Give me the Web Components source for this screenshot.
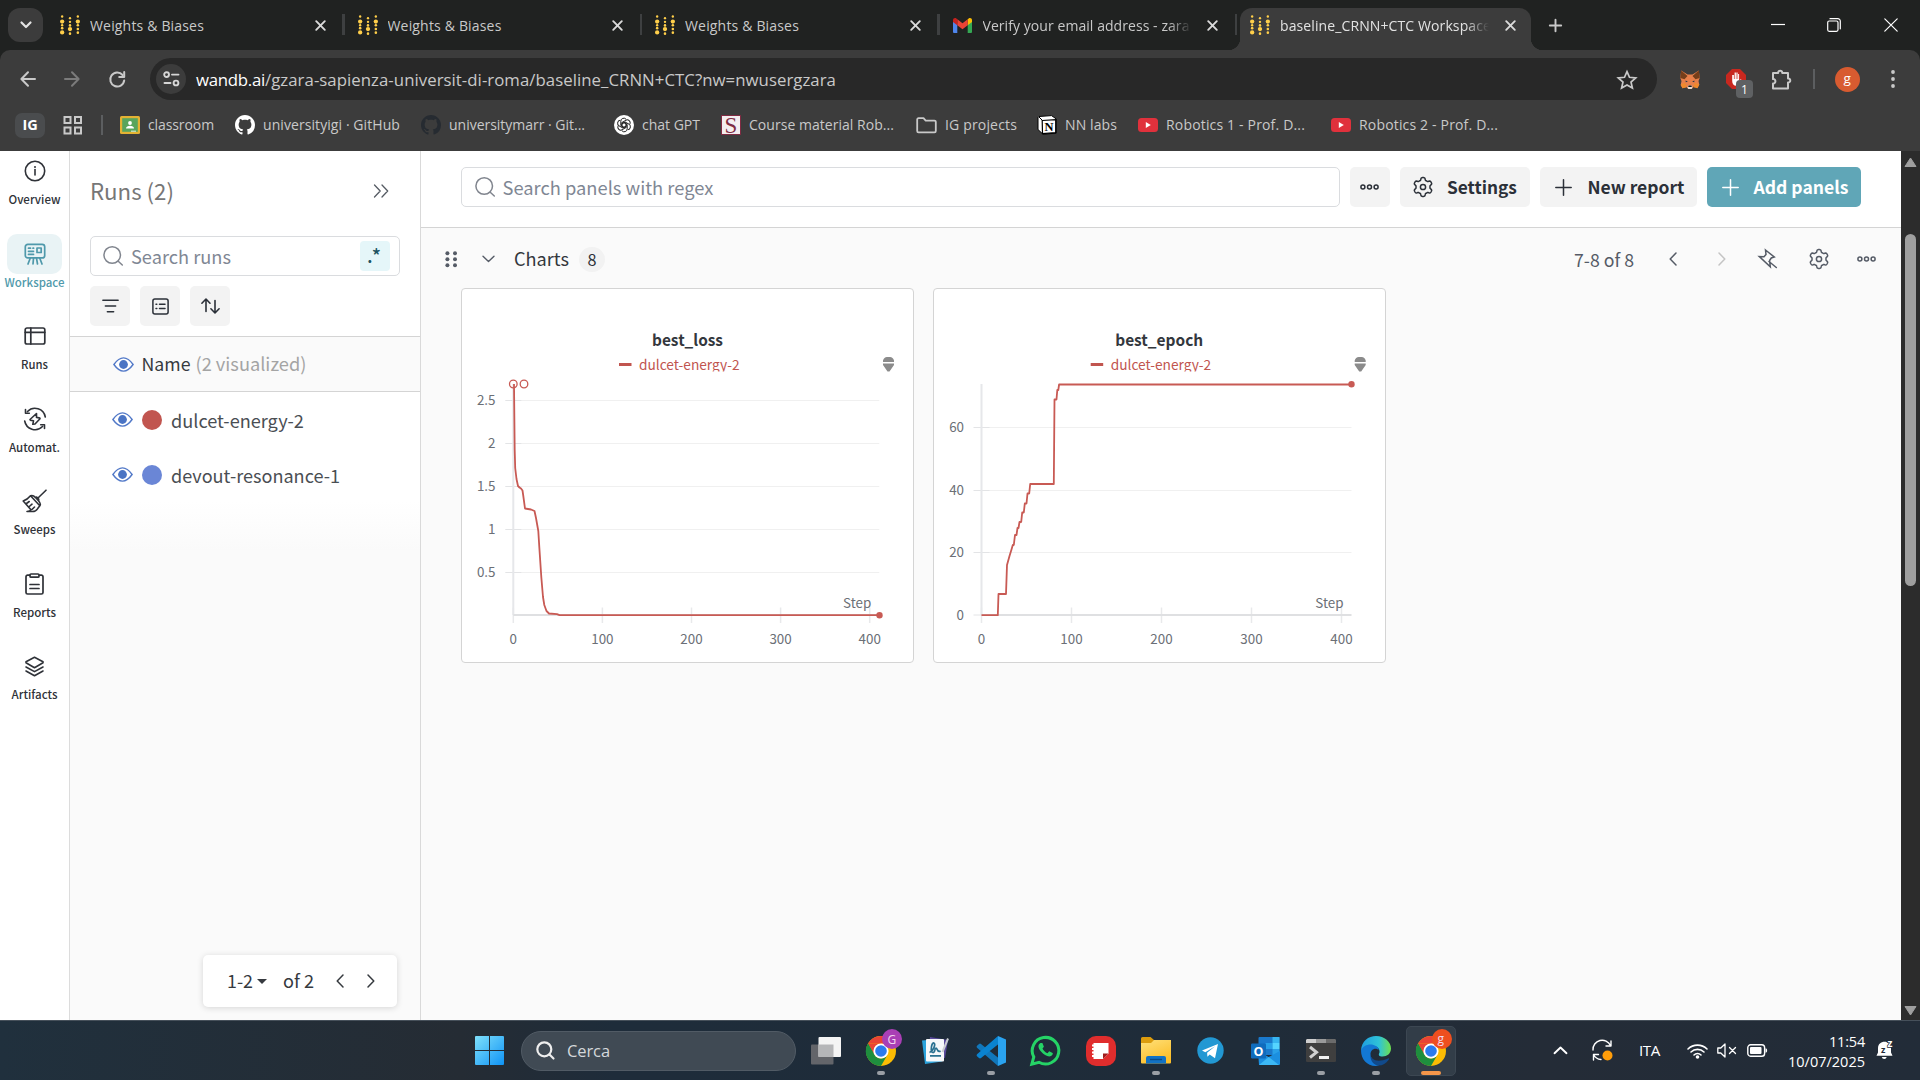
<!DOCTYPE html>
<html lang="it">
<head>
<meta charset="utf-8">
<title>baseline_CRNN+CTC Workspace</title>
<style>
html,body{margin:0;height:100%;overflow:hidden;background:#fafafa}
body{font-family:"Open Sans","Noto Sans",sans-serif}
</style>
</head>
<body>
<desktop-screen></desktop-screen>
<script>
const gear = (() => {
  let d = '';
  for (let i = 0; i < 120; i++) {
    const a = i / 120 * Math.PI * 2;
    const r = 8.2 + 1.25 * Math.tanh(2.2 * Math.cos(6 * a));
    d += (i ? 'L' : 'M') + (10 + r * Math.sin(a)).toFixed(2) + ' ' + (10 - r * Math.cos(a)).toFixed(2);
  }
  return `<path d="${d}Z"/><circle cx="10" cy="10" r="2.600"/>`;
})();
const st = (w, body, extra = '') => `<g fill="none" stroke="currentColor" stroke-width="${w}" stroke-linecap="round" stroke-linejoin="round" ${extra}>${body}</g>`;
const wbDots = (() => {
  const y = '#ffcf4a', c = (x, yy, r) => `<circle cx="${x}" cy="${yy}" r="${r}" fill="${y}"/>`;
  return c(2.2,1.3,1.2)+c(2.2,6.5,2.2)+c(2.2,10.2,1.2)+c(2.2,13.2,1.3)+c(2.2,17.6,2.2)
    +c(10.2,3,1.2)+c(10.2,6.8,1.2)+c(10.2,10.4,1.3)+c(10.2,14.2,2.2)+c(10.2,18.8,1.3)
    +c(18.2,1.3,1.2)+c(18.2,6.5,2.2)+c(18.2,10.2,1.3)+c(18.2,14,1.3)+c(18.2,17.8,1.3);
})();
const ghPath = 'M8 0C3.58 0 0 3.58 0 8c0 3.54 2.29 6.53 5.47 7.59.4.07.55-.17.55-.38 0-.19-.01-.82-.01-1.49-2.01.37-2.53-.49-2.69-.94-.09-.23-.48-.94-.82-1.13-.28-.15-.68-.52-.01-.53.63-.01 1.08.58 1.23.82.72 1.21 1.87.87 2.33.66.07-.52.28-.87.51-1.07-1.78-.2-3.64-.89-3.64-3.95 0-.87.31-1.59.82-2.15-.08-.2-.36-1.02.08-2.12 0 0 .67-.21 2.2.82.64-.18 1.32-.27 2-.27.68 0 1.36.09 2 .27 1.53-1.04 2.2-.82 2.2-.82.44 1.1.16 1.92.08 2.12.51.56.82 1.27.82 2.15 0 3.07-1.87 3.75-3.65 3.95.29.25.54.73.54 1.48 0 1.07-.01 1.93-.01 2.2 0 .21.15.46.55.38A8.013 8.013 0 0016 8c0-4.42-3.58-8-8-8z';
const chrome = `<circle cx="15" cy="15" r="15" fill="#fbbc04"/>
  <path d="M2 7.5A15 15 0 0 1 28 7.5H15z" fill="#ea4335"/>
  <path d="M2 7.5A15 15 0 0 0 15 30L21.500 18.700A7.500 7.500 0 0 1 8.500 18.700z" fill="#1e8e3e"/><path d="M2 7.500L8.500 18.700 15 15V7.500z" fill="#ea4335"/><path d="M2 7.500A15 15 0 0 0 3 24L8.500 18.700z" fill="#1e8e3e"/>
  <circle cx="15" cy="15" r="7.6" fill="#fff"/><circle cx="15" cy="15" r="5.8" fill="#2b7bee"/>`;

/* name: [width, height, viewBox, markup] */
const ICONS = {
  wb: [20, 20, '0 0 20.4 20', wbDots],
  chevS: [12, 8, '0 0 12 8', st(2.2, '<path d="M1.5 1.5L6 6l4.500-4.500"/>')],
  x: [11, 11, '0 0 11 11', st(1.9, '<path d="M1.2 1.2l8.6 8.6M9.8 1.2L1.2 9.8"/>')],
  xw: [14, 14, '0 0 14 14', st(1.2, '<path d="M.8.8l12.4 12.4M13.2.8L.8 13.2"/>')],
  minw: [14, 14, '0 0 14 14', '<path d="M0 6.500h14" stroke="currentColor" stroke-width="1.2"/>'],
  maxw: [14, 14, '0 0 14 14', st(1.2, '<rect x=".7" y="3" width="10.3" height="10.3" rx="1.5"/><path d="M3 .7h7.800a2.500 2.500 0 0 1 2.500 2.500v7.600"/>')],
  plusTab: [13, 13, '0 0 13 13', st(1.9, '<path d="M6.500.8v11.400M.8 6.500h11.400"/>')],
  gmail: [19, 15, '0 0 19 15', '<path d="M0 2v12a1 1 0 0 0 1 1h3.300V5.500z" fill="#4f86ec"/><path d="M19 2v12a1 1 0 0 1-1 1h-3.300V5.500z" fill="#34a853"/><path d="M14.700 1.200v6L19 4V2c0-1.800-2-2.600-3.300-1.600z" fill="#fbbc04"/><path d="M4.300 7.300v-6l5.200 4 5.200-4v6l-5.200 4z" fill="#ea4335"/><path d="M0 2v2l4.300 3.300V1.200L3.300.4C2-.6 0 .2 0 2z" fill="#c5221f"/>'],
  back: [16, 16, '0 0 16 16', st(2, '<path d="M15 8H1.500M8 1.300L1.400 8 8 14.700"/>')],
  fwd: [16, 16, '0 0 16 16', st(2, '<path d="M1 8h13.500M8 1.300L14.600 8 8 14.700"/>')],
  reload: [17, 17, '0 0 17 17', st(2, '<path d="M15.200 9.400A7 7 0 1 1 13.600 4"/><path d="M15.200 1v5h-5" />')],
  site: [17, 16, '0 0 17 16', st(1.9, '<circle cx="3.600" cy="3.600" r="2.400"/><path d="M9 3.600h6.500M1.500 12h6"/><circle cx="13" cy="12" r="2.400"/>')],
  star: [20, 19, '0 0 20 19', st(1.700, '<path d="M10 1.600l2.500 5.700 6.200.6-4.700 4.100 1.400 6.100-5.400-3.200-5.400 3.200L6 12 1.300 7.900l6.200-.6z" style="stroke-linejoin:miter"/>')],
  fox: [20, 19, '0 0 20 19', '<path d="M1.200.5l6.300 4h5l6.300-4 .9 7.500-1.200 3 .8 3.800-1.800 3-4-1.200L11.800 19H8.200l-1.700-1.900-4 1.200-1.800-3L1.500 11 .3 8z" fill="#e8804b"/><path d="M1.200.5L7.500 6l-3 3.300L.3 8zM18.800.5L12.500 6l3 3.300L19.700 8z" fill="#763e1a"/><path d="M.7 14.500l4.500-1.800 1.600 4.600-4.300 1zM19.300 14.500l-4.500-1.800-1.600 4.600 4.300 1z" fill="#f08a2c"/><path d="M8 15.500h4l.4 2.200-.8 1.200H8.400l-.8-1.200z" fill="#e9dcd2"/><path d="M5.500 10.500l2.400 1-2.100.8zM14.500 10.500l-2.400 1 2.100.8z" fill="#233447"/><path d="M8.500 15.500h3l.3 1.600H8.200z" fill="#161616"/>'],
  abp: [20, 20, '0 0 20 20', '<path d="M6 0h8l6 6v8l-6 6H6l-6-6V6z" fill="#c8281f"/><path d="M6.200 6v6c0 3 1.600 4.800 4 4.800s3.400-1.200 4.200-3.400l1-3-1.300.2-1 1.500V5h-1v5h-.5V3.500h-1.200V10h-.5V3.500H8.600V10h-.7V6z" fill="#fff"/>'],
  puzzle: [21, 21, '0 0 21 21', st(2, '<path d="M2 4h5.200c-.4-3 4.400-3 4 0H17v5.500c3-.3 3 4.200 0 4V19.500H2v-5c3.200.4 3.200-4.800 0-4.400z"/>')],
  kebab: [4, 18, '0 0 4 18', '<g fill="currentColor"><circle cx="2" cy="2" r="1.900"/><circle cx="2" cy="9" r="1.900"/><circle cx="2" cy="16" r="1.900"/></g>'],
  apps: [20, 19, '0 0 20 19', '<g fill="none" stroke="currentColor" stroke-width="2"><rect x="1.500" y="1" width="6" height="6"/><rect x="12" y="1" width="6" height="6"/><rect x="1.500" y="11.500" width="6" height="6"/><rect x="12" y="11.500" width="6" height="6"/></g>'],
  classroom: [20, 18, '0 0 20 18', '<rect width="20" height="18" rx="1.500" fill="#e3b233"/><rect x="2.200" y="2.200" width="15.600" height="13.600" fill="#58a55c"/><circle cx="10" cy="7" r="1.900" fill="#fff"/><path d="M6 12.500c0-3.600 8-3.600 8 0z" fill="#fff"/><path d="M11 15.800h5V14.600h-5z" fill="#cfe8d0"/>'],
  gh: [20, 20, '0 0 16 16', `<path d="${ghPath}" fill="#fff"/>`],
  ghd: [20, 20, '0 0 16 16', `<path d="${ghPath}" fill="#262b31"/>`],
  gpt: [20, 20, '0 0 20 20', '<circle cx="10" cy="10" r="10" fill="#fff"/><g fill="none" stroke="#222" stroke-width="1">' + [0, 60, 120, 180, 240, 300].map(a => `<path transform="rotate(${a} 10 10)" d="M10 12.400L6.800 10.500V6.200a3 3 0 0 1 5.400-1.800"/>`).join('') + '<path d="M10 7.500l2.200 1.200v2.600L10 12.500l-2.200-1.200V8.700z"/></g>'],
  course: [20, 20, '0 0 20 20', '<rect width="20" height="20" fill="#7f2b42"/><rect x="1" y="1" width="18" height="18" fill="#f4eef0"/><text x="10" y="17.500" text-anchor="middle" font-family="Liberation Serif" font-size="23" fill="#7f2b42">S</text>'],
  folder: [21, 17, '0 0 21 17', st(1.800, '<path d="M1.200 2.500a1.300 1.300 0 0 1 1.300-1.300h5l2.200 2.400h8.800a1.300 1.300 0 0 1 1.300 1.300v9.200a1.300 1.300 0 0 1-1.300 1.300H2.500a1.300 1.300 0 0 1-1.300-1.300z"/>')],
  notion: [20, 20, '0 0 20 20', '<path d="M2 1.500L14.500.6l4.700 3.300v14.200L6 19.300 1 14.500V2.500z" fill="#fff" stroke="#000" stroke-width="1"/><path d="M5.200 5.500l13.500-.9v13l-13.200.9z" fill="#fff" stroke="#000" stroke-width="1.200"/><path d="M2 2l3.500 3.500" stroke="#000"/><text x="12" y="16.300" text-anchor="middle" font-family="Liberation Serif" font-weight="bold" font-size="12.500" fill="#000">N</text>'],
  yt: [20, 14, '0 0 20 14', '<rect width="20" height="14" rx="3.500" fill="#e0313c"/><path d="M7.800 4.100l5 2.900-5 2.900z" fill="#fff"/>'],
  info: [22, 22, '0 0 22 22', st(1.600, '<circle cx="11" cy="11" r="9.700"/><path d="M11 9.500v5.500"/>') + '<circle cx="11" cy="6.900" r="1" fill="currentColor"/>'],
  easel: [22, 22, '0 0 22 22', st(1.700, '<rect x="1.300" y="1.300" width="19.400" height="13.600" rx="2.500"/><rect x="13" y="5" width="4.200" height="4.500"/><path d="M4.500 5.200h2M9 5.200h.6M4.500 8.300h5M4.500 11.400h5M6.200 15.200L4 21M9.500 15.200L9 21M12.500 15.200L13.500 21M15.800 15.200L18 21"/>')],
  table: [22, 18, '0 0 22 18', st(1.700, '<rect x="1.200" y="1" width="19.600" height="16" rx="1.800"/><path d="M1.200 5.300h19.600M6.800 1v16"/>')],
  auto: [24, 24, '0 0 24 24', st(1.600, '<path d="M4.500 4.500A10.500 10.500 0 0 1 22.300 10M2.500 2.500v3.800h3.800M19.500 19.500A10.500 10.500 0 0 1 1.700 14M21.500 21.500v-3.800h-3.800"/><path d="M13.500 6.500L7 12.500c0 1.500 3 .8 3.500 1.300L9.800 17.300 12 17l5-5.300c0-1.500-3-.8-3.500-1.300z"/>')],
  broom: [25, 24, '0 0 25 24', st(1.600, '<path d="M24 1.200l-7.500 7.300M13.200 8.500c1.300-1.300 4.500 1.300 3.200 3.200M8.500 6.800c2-1 3.500 0 5 1.700l3 3.200c1.500 1.700 2.500 3.200 1.500 4.800l-2.500 3.300c-1.500 2.500-3 2.700-5 2.700H5c2 0 3.500-.2 4-1.700L1.200 12c3-1 5.300-2.700 7.300-5.200zM8.500 6.800l9.300 10M4.500 14.500l2.700-2M7.300 17.500l2.700-2.300M10.200 20.300l2.300-2.300"/>')],
  clip: [19, 22, '0 0 19 22', st(1.700, '<path d="M4.500 2.200H2.600A1.600 1.600 0 0 0 1 3.800V19.400A1.600 1.600 0 0 0 2.600 21H16.400A1.600 1.600 0 0 0 18 19.400V3.800A1.600 1.600 0 0 0 16.400 2.200H14.500"/><rect x="5" y="1" width="9" height="3.200" rx="1"/><path d="M5 11.500h9M5 15.500h9"/>')],
  layers: [19, 21, '0 0 19 21', st(1.600, '<path d="M9.500 1.200L18 5.800v1l-8.500 4.900L1 6.800v-1zM1 11l8.500 4.600L18 11M1 15l8.500 4.800L18 15"/>')],
  dbl: [16, 14, '0 0 16 14', st(1.300, '<path d="M1.500 1l5.700 6-5.700 6M9 1l5.700 6L9 13"/>')],
  search: [20, 20, '0 0 20 20', st(1.500, '<circle cx="9.200" cy="9" r="8.300"/><path d="M15.500 15.500L19.300 19"/>')],
  filter: [17, 14, '0 0 17 14', st(1.600, '<path d="M.9 1.200h15.200M3.400 7h10.200M5.400 12.800h6.200"/>')],
  list: [17, 17, '0 0 17 17', st(1.500, '<rect x=".9" y=".9" width="15.200" height="15.200" rx="2"/><path d="M4 6.300h.8M7.500 6.300h5.500M4 10.500h.8M7.500 10.500h5.500"/>')],
  sort: [19, 16, '0 0 19 16', st(1.600, '<path d="M5 13.500V1.200M.9 5.200L5 1l4 4.200M14 2.500v12.200M9.900 10.800L14 15l4.100-4.200"/>')],
  eye: [21, 15, '0 0 21 15', '<path d="M.9 7.500C4.500 2.500 7.500.9 10.500.9s6 1.600 9.600 6.600c-3.600 5-6.600 6.600-9.600 6.600S4.500 12.500.9 7.500z" fill="#fff" stroke="#5279c8" stroke-width="1.400"/><circle cx="10.500" cy="7.500" r="4.400" fill="#4a74c4"/>'],
  lt: [8, 14, '0 0 8 14', st(1.500, '<path d="M7 1L1.200 7 7 13"/>')],
  gt: [8, 14, '0 0 8 14', st(1.500, '<path d="M1 1l5.800 6L1 13"/>')],
  caret: [10, 5, '0 0 10 5', '<path d="M0 0h10L5 5z" fill="currentColor"/>'],
  dots: [19, 6, '0 0 19 6', st(1.500, '<circle cx="2.900" cy="3" r="2"/><circle cx="9.500" cy="3" r="2"/><circle cx="16.100" cy="3" r="2"/>')],
  gear: [20, 20, '0 0 20 20', st(1.500, gear)],
  plus: [17, 17, '0 0 17 17', st(1.500, '<path d="M8.500.8v15.400M.8 8.500h15.400"/>')],
  grip: [13, 17, '0 0 13 17', '<g fill="currentColor"><circle cx="2.400" cy="2.300" r="2"/><circle cx="10" cy="2.300" r="2"/><circle cx="2.400" cy="8.300" r="2"/><circle cx="10" cy="8.300" r="2"/><circle cx="2.400" cy="14.200" r="2"/><circle cx="10" cy="14.200" r="2"/></g>'],
  down: [13, 8, '0 0 13 8', st(1.400, '<path d="M1 1.200l5.500 5.300L12 1.200"/>')],
  pin: [20, 20, '0 0 20 20', st(1.500, '<path d="M7.500 1l8.800 7-3 1-1.700 2.500.7 6.300L1.300 7.500l4.700.2 2-2.200zM11 12.500l7.300 6" style="stroke-linejoin:miter"/>')],
  winlogo: [29, 29, '0 0 29 29', '<defs><linearGradient id="w" x2="1" y2="1"><stop stop-color="#7fe0fb"/><stop offset="1" stop-color="#0f93f5"/></linearGradient></defs><path d="M0 1a1 1 0 0 1 1-1h13v14H0zM15 0h13a1 1 0 0 1 1 1v13H15zM0 15h14v14H1a1 1 0 0 1-1-1zM15 15h14v13a1 1 0 0 1-1 1H15z" fill="url(#w)"/>'],
  searchW: [19, 19, '0 0 19 19', st(2.200, '<circle cx="8.300" cy="8.300" r="7"/><path d="M13.500 13.500l4 4"/>')],
  taskview: [30, 28, '0 0 30 28', '<rect y="7.500" width="22.500" height="20" rx="1" fill="#63656a"/><rect x="7.500" width="22.500" height="20" rx="1" fill="#f4f4f4"/><rect x="7.500" y="7.500" width="15" height="12.500" fill="#b5b6b8"/>'],
  chrome: [30, 30, '0 0 30 30', chrome],
  sign: [27, 27, '0 0 27 27', '<path d="M8 0l18 3-3 18L6 19z" fill="#5a4b9c"/><path d="M0 3.500l18-1.500 2 22.500-17 2.500z" fill="#2aa3dc"/><rect x="4" y="2" width="18" height="22.500" rx="1" fill="#f6f8fa"/><path d="M7.500 15.500c4-1.500 6.500-8.500 4.300-9.500S8 15 10.800 15.500s1.500-4.500 3.200-4.500.2 4.500 4.700 3.200M8 18.800h11" fill="none" stroke="#2a7191" stroke-width="1.700"/><path d="M26 1.500L20.500 15" stroke="#c9ccd0" stroke-width="2"/>'],
  vscode: [30, 30, '0 0 30 30', '<path d="M22 30L1 11.800a1.500 1.500 0 0 1 0-2L3 8a1.500 1.500 0 0 1 2 0L22.500 22z" fill="#1177bb"/><path d="M22 0L1 18.200a1.500 1.500 0 0 0 0 2L3 22a1.500 1.500 0 0 0 2 0L22.500 8z" fill="#0a83d0"/><path d="M22 0l8 3.500v23L22 30z" fill="#2aa3f0"/>'],
  whatsapp: [31, 31, '0 0 31 31', '<path d="M1.800 29.200l2-7.200A13.300 13.300 0 1 1 9 27.300z" fill="none" stroke="#25d366" stroke-width="3"/><path d="M10.500 8c-3 1.500-2.500 5 .5 8.500s7.500 6 10 4.500c1.700-1 2.200-2.400 1.600-3l-3.400-1.700-1.700 1.900c-2.300-.8-4-2.500-5-4.700l1.400-1.700-1.500-3.700z" fill="#25d366"/>'],
  redapp: [30, 30, '0 0 30 30', '<rect width="30" height="30" rx="10" fill="#e02d2d"/><path d="M7.500 7h15v10.500L17 23H7.500z" fill="#fff"/><path d="M22.500 17.500H17V23z" fill="#a11d1d"/><path d="M6 9.500h3M6 13h3M6 16.500h3M6 20h3" stroke="#fff" stroke-width="1.800"/>'],
  explorer: [30, 27, '0 0 30 27', '<defs><linearGradient id="f" y2="1" x2=".5"><stop stop-color="#ffe07a"/><stop offset="1" stop-color="#fcbf2a"/></linearGradient></defs><path d="M0 1.500A1.500 1.500 0 0 1 1.500 0h8L13 3v5H0z" fill="#dc9c0d"/><path d="M0 6h10l3-3h17v22.500a1 1 0 0 1-1 1H1a1 1 0 0 1-1-1z" fill="url(#f)"/><path d="M5 26.500V21a2 2 0 0 1 2-2h16a2 2 0 0 1 2 2v5.500z" fill="#1272c4"/><path d="M9 22.500h12" stroke="#0b4a86" stroke-width="1.400"/>'],
  telegram: [27, 27, '0 0 27 27', '<circle cx="13.500" cy="13.500" r="13.200" fill="#2298d3"/><path d="M5 13.500L21 7l-3 14.200-5.300-3.700-2.300 2.200-.3-4 8-6.500-9.800 6z" fill="#fff"/>'],
  outlook: [29, 28, '0 0 29 28', '<rect x="7.500" width="21" height="18" rx="1" fill="#1a79cc"/><path d="M14.500 6h7v6h-7z" fill="#28a0e8"/><path d="M21.500 0H28.500v6h-7z" fill="#37b5f0"/><path d="M21.500 6h7v6h-7z" fill="#55d4ff"/><path d="M21.500 12h7v6h-7z" fill="#28a0e8"/><path d="M7 14l10.700 6L29 14v12.500A1.300 1.300 0 0 1 27.700 28H8z" fill="#1b8fe0"/><path d="M8 28h20L17.700 20z" fill="#3cb8f5"/><rect y="6.500" width="15" height="15" rx="1.200" fill="#0f6cbd"/><text x="7.500" y="18.500" text-anchor="middle" font-family="Open Sans" font-weight="bold" font-size="12.500" fill="#fff">O</text>'],
  terminal: [30, 23, '0 0 30 23', '<rect width="30" height="23" rx="1.200" fill="#3f3f3f"/><path d="M1 0h9v4H0V1z" fill="#cfcfcf"/><path d="M10 0h10v4H10z" fill="#9a9a9a"/><path d="M20 0h9l1 1v3H20z" fill="#6b6b6b"/><path d="M4 8l6.500 5.300L4 18.500" fill="none" stroke="#d0d0d0" stroke-width="3"/><path d="M13 17h10v3H13z" fill="#f0f0f0"/>'],
  edge: [30, 30, '0 0 30 30', '<defs><linearGradient id="e" x2="1"><stop stop-color="#1f9de0"/><stop offset=".6" stop-color="#2fc3d8"/><stop offset="1" stop-color="#6ee04e"/></linearGradient></defs><path d="M0 14.500C.5 5 7.500 0 15 0c8.500 0 15 6 15 12.500 0 5-4 8-8.500 8-3.500 0-4.500-1.500-3-4C19 13 16.500 10 12 10 6 10 1 13 0 14.500z" fill="url(#e)"/><path d="M0 14.500C2 9.500 8 7.500 12.500 9 16 10 18 12 17.500 14c-3-3-8-.5-8 4 0 6 6 10 12 8.500-2 2-4.500 3.500-7 3.500C6 30 0 23 0 14.500z" fill="#1378d4"/><path d="M9.500 18c0 6 7 9 17.500 4.500 1.500-.5 1.500.5.500 1.500C25 27.500 21 30 16.500 29.500 11 28 9 23 9.500 18z" fill="#114a8b"/>'],
  up: [15, 9, '0 0 15 9', st(1.900, '<path d="M1.500 7.200L7.500 1.500l6 5.700"/>')],
  sync: [22, 21, '0 0 22 21', st(1.400, '<path d="M1 10A9.200 9.200 0 0 1 18.500 5.500M19 1v5h-5M9 19.500A9 9 0 0 1 1.500 14.500M1.500 20v-5.500h5"/>') + '<circle cx="15.500" cy="15.500" r="5" fill="#ff9d0a"/>'],
  wifi: [21, 16, '0 0 21 16', st(1.600, '<path d="M1 6a13.500 13.500 0 0 1 19 0M4 9a9.300 9.300 0 0 1 13 0M7 12a5 5 0 0 1 7 0"/>') + '<circle cx="10.500" cy="14" r="1.800" fill="currentColor"/>'],
  mute: [20, 15, '0 0 20 15', st(1.300, '<path d="M.8 5h3l4.200-4v13l-4.200-4h-3zM12.500 4.500l6 6M18.500 4.500l-6 6"/>')],
  battery: [21, 13, '0 0 21 13', '<rect x=".8" y=".8" width="16.800" height="11.400" rx="2.800" fill="none" stroke="#fff" stroke-width="1.400"/><rect x="3" y="3" width="11.500" height="7" rx="1" fill="#fff"/><path d="M18.500 4.300c2.200.3 2.200 4.200 0 4.500z" fill="#fff"/>'],
  bell: [18, 19, '0 0 18 19', '<path d="M2 7.500C2 3 5 .8 8.500.8S15 3 15 7.500v4l1.500 3.300H.5L2 11.500zM5.800 16h4.900a2.500 2.500 0 0 1-4.900 0z" fill="#fff"/><text x="5" y="12" font-family="Open Sans" font-weight="bold" font-size="9" fill="#222c38">z</text><text x="11.500" y="6" font-family="Open Sans" font-weight="bold" font-size="10" fill="#fff" stroke="#222c38" stroke-width="1.500" paint-order="stroke">z</text>'],
  tri: [11, 9, '0 0 11 9', '<path d="M5.500 0L11 8.500H0z" fill="#9f9f9f" stroke="#9f9f9f" stroke-linejoin="round"/>'],
  trid: [11, 9, '0 0 11 9', '<path d="M5.500 9L11 .5H0z" fill="#9f9f9f" stroke="#9f9f9f" stroke-linejoin="round"/>'],
};

const define = (name, html, setup) => customElements.define(name, class extends HTMLElement {
  connectedCallback() {
    if (this.shadowRoot) return;
    const root = this.attachShadow({ mode: 'open' });
    root.innerHTML = typeof html === 'function' ? html(this) : html;
    if (setup) setup(this, root);
  }
});
const at = (el, n, d = '') => el.hasAttribute(n) ? el.getAttribute(n) : d;

/* ---------- screen ---------- */
define('desktop-screen', `<style>
  :host{display:flex;flex-direction:column;width:1920px;height:1080px;overflow:hidden}
  .page{flex:1;display:flex;min-height:0;background:#fafafa}
  .page{font-family:"Noto Sans CJK SC","Noto Sans",sans-serif}
</style>
<browser-top></browser-top>
<div class="page"><side-nav></side-nav><runs-panel></runs-panel><work-area></work-area><scroll-rail></scroll-rail></div>
<task-bar></task-bar>`);

/* ---------- browser ---------- */
define('browser-top', `<style>
  :host{display:flex;flex-direction:column;height:151px;background:#202221;color:#c9c9c9}
  .tabs{display:flex;height:50px;align-items:center}
  .ts{width:35px;height:34px;border-radius:12px;background:#3c3c3c;margin:0 5px 0 8px;display:flex;align-items:center;justify-content:center;color:#e3e3e3}
  .nt{margin-left:13.500px}
  .win{margin-left:auto;display:flex;color:#fff;padding-right:1px}
  .win span{width:56.600px;display:flex;justify-content:center}
  .low{background:#3c3c3c;border-radius:10px 10px 0 0;height:101px}
  .bar{display:flex;align-items:center;height:58px}
  .omni{margin-left:24px;width:1507px;height:42px;border-radius:21px;background:#282828;display:flex;align-items:center;box-sizing:border-box;padding:0 20px 0 6px}
  .omni fit-text{padding-top:1px}
  .site{width:30px;height:30px;border-radius:50%;background:#3c3c3c;display:flex;align-items:center;justify-content:center;margin-right:10px;color:#d6d6d6}
  .sep{width:2px;height:20px;background:#5c5e60}
  .av{width:25px;height:25px;border-radius:50%;background:#d85b30;color:#fff;display:flex;align-items:center;justify-content:center;margin-left:20px}
  .av fit-text{margin-top:-2px}
  .abp{position:relative;margin-left:26px;display:flex}
  .abp b{position:absolute;left:10px;top:11px;width:17px;height:18px;border-radius:4px;background:#5f6163;color:#fff;display:flex;align-items:center;justify-content:center;font-weight:400}
  .marks{display:flex;align-items:center;height:34px}
  .ig{width:30px;height:25px;border-radius:7px;background:#4a4c4e;display:flex;align-items:center;justify-content:center;margin-left:15px;color:#fff}
</style>
<div class="tabs">
  <div class="ts"><ui-icon n="chevS"></ui-icon></div>
  <browser-tab icon="wb" w="114">Weights &amp; Biases</browser-tab>
  <browser-tab icon="wb" w="114">Weights &amp; Biases</browser-tab>
  <browser-tab icon="wb" w="114">Weights &amp; Biases</browser-tab>
  <browser-tab icon="gmail" w="207" last>Verify your email address - zara</browser-tab>
  <browser-tab icon="wb" w="211" active>baseline_CRNN+CTC Workspace</browser-tab>
  <ui-icon class="nt" n="plusTab"></ui-icon>
  <div class="win"><span><ui-icon n="minw"></ui-icon></span><span><ui-icon n="maxw"></ui-icon></span><span><ui-icon n="xw"></ui-icon></span></div>
</div>
<div class="low">
 <div class="bar">
  <ui-icon n="back" style="margin-left:20px"></ui-icon>
  <ui-icon n="fwd" style="margin-left:28px;color:#7b7b7b"></ui-icon>
  <ui-icon n="reload" style="margin-left:29px"></ui-icon>
  <div class="omni">
    <div class="site"><ui-icon n="site"></ui-icon></div>
    <fit-text s="16.800" w="69" style="color:#fff">wandb.ai</fit-text><fit-text s="16.800" w="571">/gzara-sapienza-universit-di-roma/baseline_CRNN+CTC?nw=nwusergzara</fit-text>
    <ui-icon n="star" style="margin-left:auto"></ui-icon>
  </div>
  <ui-icon n="fox" style="margin-left:23px"></ui-icon>
  <div class="abp"><ui-icon n="abp"></ui-icon><b><fit-text s="12" w="7">1</fit-text></b></div>
  <ui-icon n="puzzle" style="margin-left:25px"></ui-icon>
  <div class="sep" style="margin-left:21px"></div>
  <div class="av"><fit-text s="13.500" w="8">g</fit-text></div>
  <ui-icon n="kebab" style="margin-left:31px"></ui-icon>
 </div>
 <div class="marks">
  <div class="ig"><fit-text s="14.500" w="15" b="700">IG</fit-text></div>
  <ui-icon n="apps" style="margin-left:18px"></ui-icon>
  <div class="sep" style="margin-left:18px"></div>
  <book-mark icon="classroom" w="66" ml="17">classroom</book-mark>
  <book-mark icon="gh" w="137" ml="21">universityigi · GitHub</book-mark>
  <book-mark icon="ghd" w="136" ml="21">universitymarr · Git...</book-mark>
  <book-mark icon="gpt" w="58" ml="29">chat GPT</book-mark>
  <book-mark icon="course" w="145" ml="21">Course material Rob...</book-mark>
  <book-mark icon="folder" w="72" ml="22">IG projects</book-mark>
  <book-mark icon="notion" w="52" ml="20">NN labs</book-mark>
  <book-mark icon="yt" w="139" ml="21">Robotics 1 - Prof. D...</book-mark>
  <book-mark icon="yt" w="139" ml="26">Robotics 2 - Prof. D...</book-mark>
 </div>
</div>`);

define('browser-tab', el => `<style>
  :host{display:flex;width:297.500px;height:50px;align-items:center;position:relative;box-sizing:border-box;padding-left:12px}
  :host([active]){color:#e3e3e3}
  .bg{position:absolute;left:2px;top:8px;width:291px;bottom:0;background:#3c3c3c;border-radius:12px 12px 0 0}
  .bg::before,.bg::after{content:"";position:absolute;bottom:0;width:12px;height:12px;background:radial-gradient(circle at 0 0,transparent 12px,#3c3c3c 12.500px)}
  .bg::before{left:-12px}
  .bg::after{right:-12px;transform:scaleX(-1)}
  .t{width:210px;height:26px;margin-left:10px;padding-top:1px;overflow:hidden;display:flex;align-items:center;position:relative}
  .ic{width:20px;display:flex;justify-content:center;position:relative}
  .fade{-webkit-mask-image:linear-gradient(90deg,#000 185px,transparent 209px)}
  .x{margin-left:14.500px;position:relative;color:#dadada}
  .s{position:absolute;right:1px;top:14px;width:2.500px;height:21px;background:#3e4041}
</style>
${el.hasAttribute('active') ? '<div class="bg"></div>' : ''}
<div class="ic"><ui-icon n="${at(el,'icon')}"></ui-icon></div>
<div class="t ${+at(el,'w') > 200 ? 'fade' : ''}"><fit-text s="14" w="${at(el,'w')}">${el.innerHTML}</fit-text></div>
<ui-icon class="x" n="x"></ui-icon>
${el.hasAttribute('active') ? '' : '<div class="s"></div>'}`);

define('book-mark', el => `<style>:host{display:flex;align-items:center;margin-left:${at(el,'ml')}px}fit-text{margin-left:8px}</style>
<ui-icon n="${at(el,'icon')}"></ui-icon><fit-text s="14" w="${at(el,'w')}">${el.innerHTML}</fit-text>`);

/* ---------- left navigation ---------- */
define('side-nav', `<style>:host{display:flex;flex-direction:column;width:69px;background:#fff;border-right:1px solid #dcdcdc;color:#2f3238}</style>
<nav-item icon="info" w="52">Overview</nav-item>
<nav-item icon="easel" w="60" on>Workspace</nav-item>
<nav-item icon="table" w="27">Runs</nav-item>
<nav-item icon="auto" w="51">Automat.</nav-item>
<nav-item icon="broom" w="42">Sweeps</nav-item>
<nav-item icon="clip" w="43">Reports</nav-item>
<nav-item icon="layers" w="46">Artifacts</nav-item>`);
define('nav-item', el => `<style>
  :host{display:flex;flex-direction:column;align-items:center;height:82.500px}
  .p{width:55px;height:40px;border-radius:10px;display:flex;align-items:center;justify-content:center}
  :host([on]){color:#4f99ab}
  :host([on]) .p{background:#e9f3f5}
  fit-text{margin-top:-6px}
</style><div class="p"><ui-icon n="${at(el,'icon')}"></ui-icon></div><fit-text fit="size" s="12" b="500" w="${at(el,'w')}">${el.innerHTML}</fit-text>`);

/* ---------- runs ---------- */
define('runs-panel', `<style>
  :host{display:flex;flex-direction:column;width:350px;border-right:1px solid #d9d9d9;background:linear-gradient(#fff 350px,#fafafa 400px)}
  .h{display:flex;height:80px;align-items:center;padding:0 31px 0 20px;justify-content:space-between;color:#777}
  fit-text{margin-top:-2px}
  .s{margin:5px 0 0 20px;width:310px;height:40px;box-sizing:border-box;border:1px solid #dadcdf;border-radius:5px;display:flex;align-items:center;padding:0 9px 0 12px;background:#fff;color:#80858e}
  .rx{margin-left:auto;width:30px;height:30px;border-radius:4px;background:#e5f6f9;display:flex;align-items:center;justify-content:center;color:#1c5361}
  .b{display:flex;gap:10px;margin:10px 0 0 20px;color:#2b3038}
  .b span{width:40px;height:40px;border-radius:5px;background:#f3f3f3;display:flex;align-items:center;justify-content:center}
  .n{margin-top:10px;height:54px;border:solid #d4d4d4;border-width:1px 0;background:#fafafa;display:flex;align-items:center;padding-left:42.500px;color:#363a3f}
  .pg{margin:auto 23px 13px auto;width:194px;height:52px;border-radius:5px;background:#fff;box-shadow:0 1px 6px rgba(0,0,0,.15);display:flex;align-items:center;box-sizing:border-box;padding-left:24px;color:#363a3f}
</style>
<div class="h"><fit-text fit="size" s="22" w="84">Runs (2)</fit-text><ui-icon n="dbl" style="color:#555b63"></ui-icon></div>
<div class="s"><ui-icon n="search"></ui-icon><fit-text fit="size" s="18" w="100" style="margin-left:8px;margin-top:0;color:#7f8794">Search runs</fit-text><div class="rx"><fit-text s="19" w="16" b="500">.*</fit-text></div></div>
<div class="b"><span><ui-icon n="filter"></ui-icon></span><span><ui-icon n="list"></ui-icon></span><span><ui-icon n="sort"></ui-icon></span></div>
<div class="n"><ui-icon n="eye"></ui-icon><fit-text fit="size" s="18" w="49" style="margin-left:8px">Name</fit-text><fit-text fit="size" s="18" w="111" style="margin-left:5px;color:#a4a4a4">(2 visualized)</fit-text></div>
<run-row c="#c1554f" w="133">dulcet-energy-2</run-row>
<run-row c="#6a86d6" w="169">devout-resonance-1</run-row>
<div class="pg"><fit-text fit="size" s="18" w="26">1-2</fit-text><ui-icon n="caret" style="margin-left:4px"></ui-icon><fit-text fit="size" s="18" w="31" style="margin-left:16px">of 2</fit-text><ui-icon n="lt" style="margin-left:22px"></ui-icon><ui-icon n="gt" style="margin-left:23px"></ui-icon></div>`);
define('run-row', el => `<style>
 :host{display:flex;height:55px;align-items:center;padding-left:41.500px;color:#4a4e53}
 i{width:20px;height:20px;border-radius:50%;margin:1px 9px 0 9.500px;background:${at(el,'c')}}
</style><ui-icon n="eye"></ui-icon><i></i><fit-text fit="size" s="18" w="${at(el,'w')}">${el.innerHTML}</fit-text>`);

/* ---------- workspace ---------- */
define('work-area', `<style>
  :host{display:flex;flex-direction:column;flex:1;background:#fafafa;color:#2b3038}
  .top{height:76px;box-sizing:border-box;background:#fff;display:flex;gap:10px;padding:16px 40px 0;border-bottom:0}
  .line{height:1px;background:#d4d4d4}
  .s{width:879px;height:40px;box-sizing:border-box;border:1px solid #dadcdf;border-radius:5px;display:flex;align-items:center;padding-left:13px;color:#80858e}
  .sec{display:flex;height:60px;align-items:center;padding:2px 25px 0 24px;box-sizing:border-box;color:#555b66}
  .sec>fit-text{margin-top:-2px}
  .k{width:26px;height:25px;border-radius:13px;background:#f2f2f2;display:flex;align-items:center;justify-content:center;margin-left:10px;color:#2b3038}
  .k fit-text{margin-top:-1px}
  .cards{display:flex;gap:19px;padding-left:40px}
</style>
<div class="top">
 <div class="s"><ui-icon n="search"></ui-icon><fit-text fit="size" s="18" w="211" style="margin-left:7.500px;color:#7f8794">Search panels with regex</fit-text></div>
 <tool-button w="40" icon="dots" pl="10"></tool-button>
 <tool-button w="130" icon="gear" pl="13" tw="70" gap="14">Settings</tool-button>
 <tool-button w="157" icon="plus" pl="14.500" tw="97" gap="16">New report</tool-button>
 <tool-button w="154" icon="plus" pl="14.500" tw="95" gap="15" primary>Add panels</tool-button>
</div><div class="line"></div>
<div class="sec">
 <ui-icon n="grip"></ui-icon><ui-icon n="down" style="margin-left:24px"></ui-icon>
 <fit-text fit="size" s="18" w="55" style="margin-left:19px;color:#33373d">Charts</fit-text><div class="k"><fit-text fit="size" s="16" w="9">8</fit-text></div>
 <fit-text fit="size" s="18" w="60" style="margin-left:auto;margin-top:-1px">7-8 of 8</fit-text>
 <ui-icon n="lt" style="margin-left:35px"></ui-icon><ui-icon n="gt" style="margin-left:41px;color:#c4c4c4"></ui-icon>
 <ui-icon n="pin" style="margin-left:32px"></ui-icon><ui-icon n="gear" style="margin-left:31px"></ui-icon><ui-icon n="dots" style="margin-left:28px"></ui-icon>
</div>
<div class="cards"><chart-panel kind="loss"></chart-panel><chart-panel kind="epoch"></chart-panel></div>`);
define('tool-button', el => `<style>
 :host{display:flex;align-items:center;box-sizing:border-box;width:${at(el,'w')}px;height:40px;border-radius:5px;background:#f3f3f3;padding-left:${at(el,'pl')}px;color:#2b3038}
 :host([primary]){background:#60a6b7;color:#fff}
 fit-text{margin-left:${at(el,'gap','0')}px}
</style><ui-icon n="${at(el,'icon')}"></ui-icon>${at(el,'tw') ? `<fit-text fit="size" s="18" b="600" w="${at(el,'tw')}">${el.innerHTML}</fit-text>` : ''}`);

const CH = {
  loss: { title: 'best_loss', tw: 71, x0: 461, cx: 687.5, ax: 513.3, end: 879.3, dx: 89.1, yr: 495.5,
    ys: [['2.5', 400.5], ['2', 443.5], ['1.5', 486.5], ['1', 529.5], ['0.5', 572.5]],
    d: 'M514 384L514.700 450L515.200 468L516.500 479L518 486L519.500 487.500L521 488.500L522.500 490.500L523.300 496L525 508.500L531 509.500L534.500 511L536 518L538.300 531L539.300 547L541.300 577L543 597L544.300 605L546.500 611L549 613.500L557 614.200L559.500 615.200H879.300',
    dot: [879.5, 615.2], extra: '<circle cx="513.300" cy="384" r="3.800"/><circle cx="524" cy="384" r="3.800"/>' },
  epoch: { title: 'best_epoch', tw: 88, x0: 933.5, cx: 1159.7, ax: 982, end: 1352, dx: 90, yr: 964.5,
    ys: [['60', 427.5], ['40', 490.5], ['20', 552.5], ['0', 615]],
    d: 'M982 615.200H998.300L999 594H1006.500L1007.500 565L1010 556L1012 549.500L1013.300 545H1014.300L1015.500 535H1017L1018 528H1019L1020 522H1021.700L1022.700 512.500H1024.300L1025.300 503.500H1027L1028 493.500H1029.700L1030.700 484H1054.300L1055 399.500H1057L1057.800 390H1058.800L1059.600 384.500H1352',
    dot: [1352, 384.2], extra: '' },
};
define('chart-panel', el => {
  const c = CH[at(el, 'kind')];
  const lg = c.cx - 687.5;
  const grid = c.ys.map(([t, y]) => (t === '0' ? '' : `<path d="M${c.ax} ${y}H${c.end}" stroke="#f0f0f0"/>`) + `<path d="M${c.ax - 8} ${y}H${c.ax + 8}" stroke="#e3e4e6"/><text x="${c.yr}" y="${y + 4.700}" text-anchor="end">${t}</text>`).join('');
  const xs = [0, 1, 2, 3, 4].map(i => `<path d="M${c.ax + i * c.dx} 607.500V623" stroke="#e8e9eb" stroke-width="1.500"/><text x="${c.ax + i * c.dx}" y="644" text-anchor="middle">${i * 100 || 0}</text>`).join('');
  return `<style>:host{display:block;width:453px;height:375px;box-sizing:border-box;border:1px solid #d4d4d4;border-radius:4px;background:#fff;overflow:hidden}
  svg{display:block;margin:-1px}text{font-family:"Noto Sans CJK SC","Noto Sans",sans-serif;font-size:13.400px;fill:#6b6f76}</style>
  <svg width="453" height="375" viewBox="${c.x0} 288 453 375" fill="none">
  <text x="${c.cx}" y="345.700" text-anchor="middle" textLength="${c.tw}" lengthAdjust="spacingAndGlyphs" style="font-size:16px;font-weight:600;fill:#33373d">${c.title}</text>
  <path d="M${619 + lg} 364.500h12.500" stroke="#c1554f" stroke-width="3"/>
  <text x="${639 + lg}" y="370" textLength="100.500" lengthAdjust="spacingAndGlyphs" style="fill:#c1554f;font-size:13.800px">dulcet-energy-2</text>
  <path d="M${639 + lg} 371.500h101v4h-101z" fill="#fff"/>
  <path d="M${883 + lg} 362v-1.500q1-3.500 4-3.500h3q3 0 4 3.500v1.500zM${883 + lg} 363.500h11v1.500l-4.500 6.500h-2l-4.500-6.500z" fill="#8b8b8b"/>
  ${grid}${xs}
  <path d="M${c.ax} 384V615" stroke="#e6e7ea" stroke-width="2"/><path d="M${c.ax} 615H${c.end}" stroke="#dfe0e2" stroke-width="2"/>
  <text x="${c.end - 8}" y="608" text-anchor="end">Step</text>
  <g stroke="#c85a54" stroke-width="1.300">${c.extra}<path d="${c.d}" stroke-width="1.800" stroke-linejoin="round"/></g>
  <circle cx="${c.dot[0]}" cy="${c.dot[1]}" r="3.200" fill="#c85a54"/></svg>`;
});

define('scroll-rail', `<style>:host{display:flex;flex-direction:column;align-items:center;width:19px;background:#2c2c2c;padding:7px 0 5px;box-sizing:border-box}
 .t{width:11px;height:352px;border-radius:6px;background:#9f9f9f;margin:67px 0 auto}</style><ui-icon n="tri"></ui-icon><div class="t"></div><ui-icon n="trid"></ui-icon>`);

/* ---------- task bar ---------- */
define('task-bar', `<style>
 :host{display:flex;height:60px;box-sizing:border-box;border-top:1px solid #46505a;align-items:center;background:linear-gradient(90deg,#20303d 0,#252c34 24%,#1e2c3a 32%,#1f2c39 65%,#242c37 80%,#222c38 100%);color:#fff}
 .q{width:275px;height:40px;box-sizing:border-box;border:1px solid #515b65;border-radius:20px;background:#404a54;margin:0 2px 0 17px;display:flex;align-items:center;padding-left:14px;color:#eee}
 .tray{margin-left:auto;display:flex;align-items:center;padding-right:26px}
 .dt{display:flex;flex-direction:column;align-items:flex-end;width:78px;margin:-2px 0 0 19px}
</style>
<ui-icon n="winlogo" style="margin-left:475px"></ui-icon>
<div class="q"><ui-icon n="searchW"></ui-icon><fit-text s="16.500" w="43" style="margin-left:12px;color:#d4d8db">Cerca</fit-text></div>
<task-app icon="taskview"></task-app>
<task-app icon="chrome" ind badge="G" bc="#a93fb5"></task-app>
<task-app icon="sign"></task-app>
<task-app icon="vscode" ind></task-app>
<task-app icon="whatsapp"></task-app>
<task-app icon="redapp"></task-app>
<task-app icon="explorer" ind></task-app>
<task-app icon="telegram"></task-app>
<task-app icon="outlook"></task-app>
<task-app icon="terminal" ind></task-app>
<task-app icon="edge" ind></task-app>
<task-app icon="chrome" ind on badge="g" bc="#ee4f1f"></task-app>
<div class="tray">
 <ui-icon n="up"></ui-icon><ui-icon n="sync" style="margin-left:24px"></ui-icon>
 <fit-text s="15.200" w="21" style="margin-left:25px;margin-top:-1px">ITA</fit-text>
 <ui-icon n="wifi" style="margin-left:27px"></ui-icon><ui-icon n="mute" style="margin-left:9px"></ui-icon><ui-icon n="battery" style="margin-left:10px"></ui-icon>
 <div class="dt"><fit-text s="14.500" w="36" lh="20">11:54</fit-text><fit-text s="14.500" w="77" lh="20">10/07/2025</fit-text></div>
 <ui-icon n="bell" style="margin-left:11px"></ui-icon>
</div>`);
define('task-app', el => `<style>
 :host{display:flex;width:55px;height:50px;align-items:center;justify-content:center;position:relative}
 .f{position:absolute;inset:0 2.500px;border-radius:5px;background:#323d48;border:1px solid #3c4752;box-sizing:border-box}
 ui-icon{position:relative}
 .d{position:absolute;bottom:1px;left:23.500px;width:8px;height:4px;border-radius:2px;background:#9a9fa5}
 :host([on]) .d{left:17.500px;width:20px;background:#f5964a}
 .b{position:absolute;left:28.500px;top:3.500px;width:20px;height:20px;border-radius:50%;background:${at(el,'bc','none')};display:flex;align-items:center;justify-content:center}
</style>${el.hasAttribute('on') ? '<div class="f"></div>' : ''}<ui-icon n="${at(el,'icon')}"></ui-icon>
${el.hasAttribute('ind') ? '<div class="d"></div>' : ''}${at(el,'badge') ? `<div class="b"><fit-text s="12" w="8" style="color:#f3d9f0;margin-top:${at(el,'badge') === 'g' ? -2 : 0}px">${at(el,'badge')}</fit-text></div>` : ''}`);

/* ---------- primitives ---------- */
define('ui-icon', el => {
  const [w, h, vb, m] = ICONS[at(el, 'n')];
  return `<style>:host{display:block;flex:none;width:${w}px;height:${h}px}svg{display:block;overflow:visible}</style><svg width="${w}" height="${h}" viewBox="${vb}">${m}</svg>`;
});
/* Text of a fixed advance width: adjusts tracking, or the size when fit="size". */
define('fit-text', el => `<style>
  :host{display:block;flex:none;width:${at(el,'w')}px;height:${at(el,'lh','24')}px}
  span{display:inline-block;white-space:pre;line-height:${at(el,'lh','24')}px;font-size:${at(el,'s','16')}px;font-weight:${at(el,'b','400')}}
</style><span><slot></slot></span>`, (el, root) => {
  const s = root.querySelector('span'), w = +at(el, 'w'), nat = s.getBoundingClientRect().width;
  const n = el.textContent.length;
  if (!nat) return;
  if (at(el, 'fit') === 'size') s.style.fontSize = (+at(el, 's') * w / nat).toFixed(3) + 'px';
  else if (n > 1) s.style.letterSpacing = ((w - nat) / n).toFixed(3) + 'px';
});
</script>
</body>
</html>
